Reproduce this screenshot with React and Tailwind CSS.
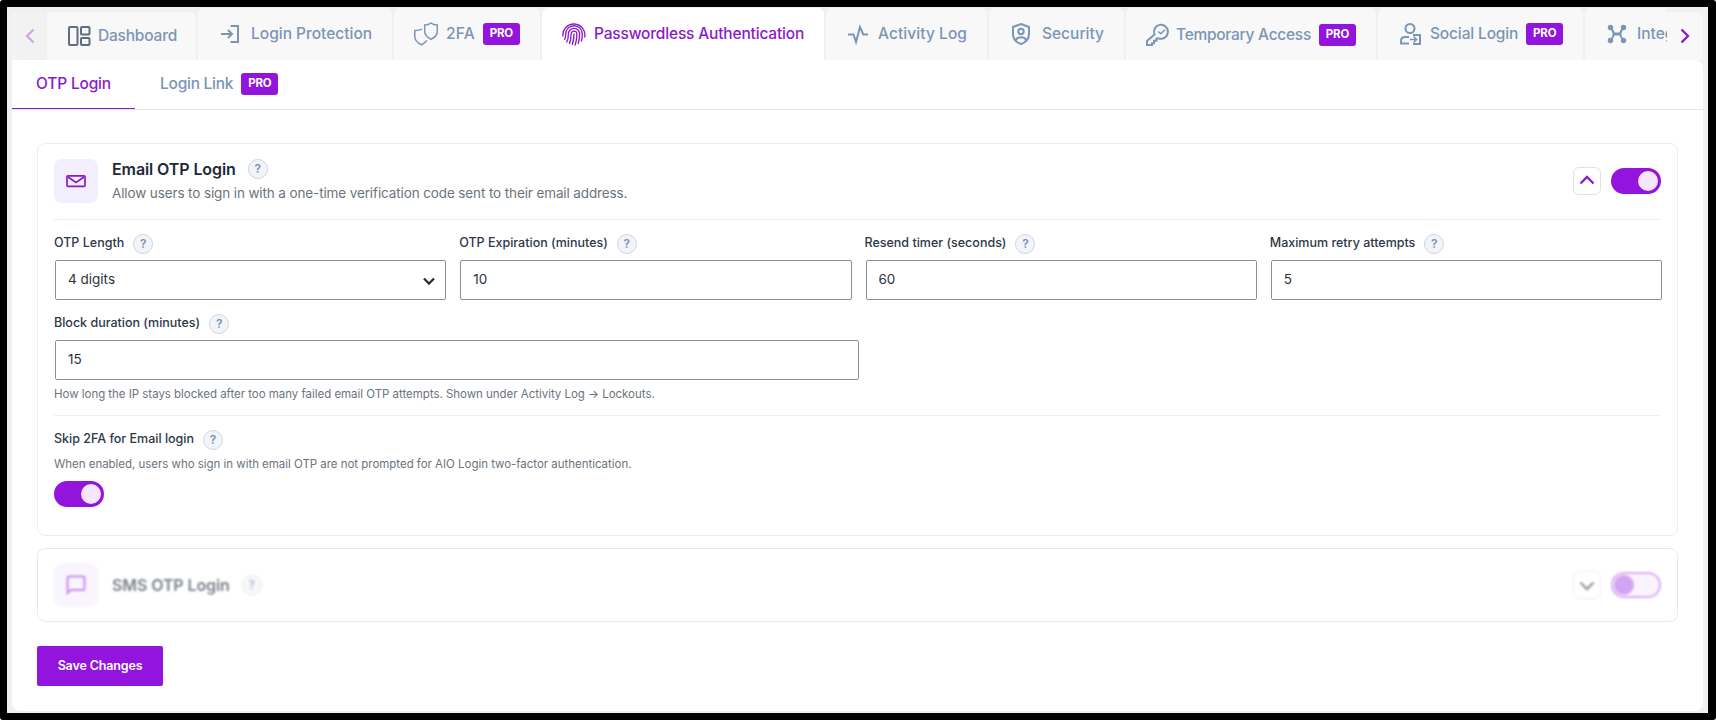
import { useState } from "react";

function Svg({ children, sw = 2, className = "" }) {
  return (
    <svg
      viewBox="0 0 24 24"
      fill="none"
      stroke="currentColor"
      strokeWidth={sw}
      className={`size-6 shrink-0 ${className}`}
    >
      {children}
    </svg>
  );
}

const icons = {
  dashboard: (
    <Svg sw={2} className="text-[#5f6c86]">
      <rect x="2" y="3" width="8.5" height="18" rx="1" />
      <rect x="14" y="3" width="8.5" height="7.5" rx="1" />
      <rect x="14" y="14" width="8.5" height="7" rx="1" />
    </Svg>
  ),
  login: (
    <Svg>
      <path d="M3 12h11M10 8l4 4-4 4" />
      <path d="M12.5 4h7.5v16h-7.5" />
    </Svg>
  ),
  twofa: (
    <Svg sw={1.5}>
      <path d="M17 1c2 1.7 4.2 2 6.3 2v6.2c0 4-2.8 6.400-6.300 8C13.500 15.600 10.700 13.200 10.700 9.200V3c2.100 0 4.300-.3 6.300-2z" />
      <path d="M8 7.100C6 8.200 3.500 8.500.8 8.500v6c0 4 2.900 6.400 6.700 8.300 2.300-1.100 4.200-2.500 5.400-4.500" />
    </Svg>
  ),
  passwordless: (
    <Svg sw={1.35}>
      <path d="M1 14.500A11 11 0 1 1 22.600 15.500" />
      <path d="M2.500 18c1-2 1.200-4 1.200-6a8.300 8.300 0 0 1 16.600 0c0 2.600-.2 5-1 7.500" />
      <path d="M4.500 20.500c1.500-2.500 1.900-5.500 1.900-8.500a5.600 5.600 0 0 1 11.200 0c0 3.500-.4 6.600-1.500 10" />
      <path d="M7.300 22c1.400-3 1.800-6.300 1.800-10a2.900 2.900 0 0 1 5.800 0c0 4-.5 7.500-1.900 11.500" />
      <path d="M12 11.500c0 4-.4 7.500-1.800 11.500" />
    </Svg>
  ),
  activity: (
    <Svg>
      <path d="M2 12.500h5.500l2.500 7.500 4-15 3.300 7.500H22" />
    </Svg>
  ),
  security: (
    <Svg>
      <path d="M12 2l8 3v7c0 4.600-3.200 8.300-8 10-4.800-1.700-8-5.400-8-10V5z" />
      <circle cx="12" cy="9.500" r="2.700" />
      <path d="M6.500 18c1.500-2 3.300-2.800 5.500-2.800s4 .8 5.500 2.800" />
    </Svg>
  ),
  access: (
    <Svg>
      <path d="M8.500 11.500A7 7 0 1 1 13 15.500l-2.500 0v2.300H8v2.500H6V22H1v-4z" />
      <path d="M12.300 8.500l2.500 2.300 4-4" strokeWidth="1.500" />
    </Svg>
  ),
  social: (
    <Svg>
      <circle cx="12" cy="6.500" r="4.500" />
      <path d="M11 21.500H3V19c0-2.500 1.500-4 4-4h4" />
      <path d="M16 14.500V13h6v9h-6v-1.500" />
      <path d="M12 17.500h6.500M16 15l2.500 2.500L16 20" strokeWidth="1.700" />
    </Svg>
  ),
  integrations: (
    <Svg>
      <path d="M5.500 6q6.500 6 0 12M18.500 6q-6.500 6 0 12M8 12h8" />
      <rect x="8.500" y="10.500" width="7" height="3" fill="currentColor" stroke="none" />
      <g fill="currentColor" stroke="none">
        <circle cx="5.500" cy="5.500" r="2.700" />
        <circle cx="18.500" cy="5.500" r="2.700" />
        <circle cx="5.500" cy="18.500" r="2.700" />
        <circle cx="18.500" cy="18.500" r="2.700" />
      </g>
    </Svg>
  ),
};

const tabs = [
  { id: "dashboard", label: "Dashboard", box: "w-[149px] mt-[5px] h-12", text: "-ml-px tracking-[-0.2px]" },
  { id: "login", label: "Login Protection", box: "w-[194px] mt-px pb-px h-[52px] rounded-t-md", text: "ml-px" },
  { id: "twofa", label: "2FA", pro: true, box: "w-[146px] mt-px pb-px h-[52px] rounded-t-md", text: "tracking-[0.2px]" },
  { id: "passwordless", label: "Passwordless Authentication", box: "w-[282px] mt-px pb-px h-[52px] rounded-t-md", text: "tracking-[-0.17px]" },
  { id: "activity", label: "Activity Log", box: "w-[161px] mt-px pb-px h-[52px] rounded-t-md", text: "tracking-[0.07px]" },
  { id: "security", label: "Security", box: "w-[135px] mt-px pb-px h-[52px] rounded-t-md", text: "ml-px" },
  { id: "access", label: "Temporary Access", pro: true, box: "w-[250px] mt-px pt-px h-[52px] rounded-t-md", text: "-ml-0.5 tracking-[-0.27px]" },
  { id: "social", label: "Social Login", pro: true, box: "w-[205px] mt-px pb-px h-[52px] rounded-t-md", text: "tracking-[-0.15px]" },
  { id: "integrations", label: "Integrations", box: "w-[160px] mt-px pb-px h-[52px] rounded-t-md", text: "" },
];

function ProBadge() {
  return (
    <span className="flex h-[22px] w-[37px] shrink-0 items-center justify-center rounded-[3px] bg-[#9314dc] text-[11.5px] font-bold tracking-[-0.2px] text-white">
      PRO
    </span>
  );
}

function Help() {
  return (
    <span className="flex size-5 shrink-0 items-center justify-center rounded-full border border-[#cfd6e0] bg-[#f1f4f8] text-xs font-semibold text-[#7a90b5]">
      ?
    </span>
  );
}

function Chevron({ d, className }) {
  return (
    <svg viewBox="0 0 16 16" fill="none" stroke="currentColor" strokeWidth="2.300" className={className}>
      <path d={d} />
    </svg>
  );
}

function Toggle({ on, onClick }) {
  return (
    <button
      role="switch"
      aria-checked={on}
      onClick={onClick}
      className={`flex h-[26px] w-[50px] items-center rounded-full border-2 px-px ${
        on ? "justify-end border-[#9314dc] bg-[#9314dc]" : "justify-start border-[#bf74ea] bg-[#f7eefe]"
      }`}
    >
      <span className={`size-5 rounded-full ${on ? "bg-[#f5e6fd]" : "bg-[#b968ea]"}`} />
    </button>
  );
}

function Label({ children }) {
  return (
    <div className="flex h-5 gap-[9px]">
      <span className="text-[12.5px] leading-[17px] font-medium text-[#2c3848]">{children}</span>
      <Help />
    </div>
  );
}

const inputClass =
  "ml-px mt-1.5 flex h-10 items-center rounded-[2px] border border-[#8c8f94] bg-white px-3 pb-0.5 text-[13.5px] text-[#2c3338] outline-none";

function Field({ label, value }) {
  return (
    <div className="flex flex-col">
      <Label>{label}</Label>
      <input className={inputClass} defaultValue={value} />
    </div>
  );
}

function App() {
  const [active, setActive] = useState("passwordless");
  const [emailOn, setEmailOn] = useState(true);
  const [skip, setSkip] = useState(true);

  return (
    <div className="h-[720px] w-[1716px] overflow-hidden rounded-[3px] border-[7px] border-r-8 border-black bg-[#f0f0f1] pr-[5px] pl-[5px] font-['Inter','Liberation_Sans',sans-serif]">
      <nav className="flex h-[53px] text-[15.5px] font-medium text-[#7b95b5]">
        <button className="mt-[5px] flex h-12 w-[35px] shrink-0 items-center justify-center bg-linear-to-r from-[#f3f3f3] to-[#f1f1f2] text-[#d4a1ee]">
          <Chevron d="M11.500 1.500L5 8l6.500 6.500" className="size-4" />
        </button>
        <div className="flex min-w-0 flex-1 gap-0.5 overflow-hidden">
          {tabs.map((t) => (
            <button
              key={t.id}
              onClick={() => setActive(t.id)}
              className={`flex shrink-0 items-center gap-2 rounded-tr-md pl-5 ${t.box} ${
                active === t.id ? "bg-white text-[#8a1ac9]" : "bg-[#f8f8f8]"
              }`}
            >
              {icons[t.id]}
              <span className={`whitespace-nowrap ${t.text}`}>{t.label}</span>
              {t.pro ? <ProBadge /> : null}
            </button>
          ))}
        </div>
        <button className="mt-[5px] flex h-12 w-9 shrink-0 items-center justify-center rounded-tr-md bg-[#f8f8f8] text-[#8a1ac9]">
          <Chevron d="M4.500 1.500L11 8l-6.500 6.500" className="size-4" />
        </button>
      </nav>

      <main className="h-[651px] rounded-b-lg rounded-tr-lg bg-white">
        <div className="flex h-[50px] border-b border-[#e6e7e9] text-[15.5px] font-medium">
          <button className="-mb-px flex h-[49px] w-[123px] items-center justify-center border-b border-[#8a1ac9] tracking-[-0.2px] text-[#8a1ac9]">
            OTP Login
          </button>
          <button className="flex h-12 items-center gap-2 pl-[25px] text-[#7b95b5]">
            <span className="tracking-[-0.25px]">Login Link</span>
            <ProBadge />
          </button>
        </div>

        <div className="flex flex-col items-start pt-[33px] pr-[25px] pl-[25px]">
          <section className="h-[393px] w-full rounded-lg border border-[#eceef0] px-4">
            <div className="flex h-[76px] items-center border-b border-[#ebedef] pb-0.5">
              <div className="flex size-11 items-center justify-center rounded-lg bg-[#f4efff] text-[#8a1ac9]">
                <svg viewBox="0 0 20 14" fill="none" stroke="currentColor" strokeWidth="1.700" className="h-3.5 w-5">
                  <rect x="1" y="1.800" width="18" height="10.500" rx="1" />
                  <path d="M2 3l8 5.500L18 3" />
                </svg>
              </div>
              <div className="ml-3.5 flex-1">
                <div className="flex items-center gap-3">
                  <h2 className="text-base leading-6 font-semibold tracking-[-0.1px] text-[#1d2939]">Email OTP Login</h2>
                  <Help />
                </div>
                <p className="text-[13.5px] leading-6 tracking-[-0.12px] text-[#6b747e]">
                  Allow users to sign in with a one-time verification code sent to their email address.
                </p>
              </div>
              <button className="mr-2.5 flex size-7 items-center justify-center rounded-md border border-[#dfe3e8] text-[#8a1ac9]">
                <Chevron d="M1.500 10.500L8 4l6.500 6.500" className="size-4" />
              </button>
              <Toggle on={emailOn} onClick={() => setEmailOn(!emailOn)} />
            </div>

            <div className="-mr-px grid grid-cols-4 gap-x-[13px] gap-y-3.5 pt-3.5">
              <div className="flex flex-col">
                <Label>OTP Length</Label>
                <button className={`${inputClass} justify-between pr-2`}>
                  4 digits
                  <Chevron d="M3 5.500l5 5 5-5" className="mt-1 size-4" />
                </button>
              </div>
              <Field label="OTP Expiration (minutes)" value="10" />
              <Field label="Resend timer (seconds)" value="60" />
              <Field label="Maximum retry attempts" value="5" />
            </div>
            <div className="w-[805px] pt-3.5">
              <Field label="Block duration (minutes)" value="15" />
            </div>
            <p className="mt-[5px] text-[11.5px] leading-[18px] tracking-[-0.03px] text-[#6b747e]">
              How long the IP stays blocked after too many failed email OTP attempts. Shown under Activity Log → Lockouts.
            </p>
            <div className="mt-3 border-t border-[#f0f1f3] pt-3.5">
              <Label>Skip 2FA for Email login</Label>
              <p className="mt-[5px] mb-2 text-[11.5px] leading-[18px] tracking-[-0.03px] text-[#6b747e]">
                When enabled, users who sign in with email OTP are not prompted for AIO Login two-factor authentication.
              </p>
              <Toggle on={skip} onClick={() => setSkip(!skip)} />
            </div>
          </section>

          <section className="mt-3 h-[74px] w-full rounded-lg border border-[#e7eaed] px-4">
            <div className="flex h-[72px] items-center opacity-60 blur-[0.8px]">
              <div className="flex size-11 items-center justify-center rounded-lg bg-[#f4efff] text-[#a83ee4]">
                <svg viewBox="0 0 20 20" fill="none" stroke="currentColor" strokeWidth="2" className="size-5">
                  <path d="M1.500 18V3.200c0-1 .7-1.700 1.700-1.700h13.600c1 0 1.700.7 1.700 1.700v10c0 1-.7 1.700-1.700 1.700H5z" />
                </svg>
              </div>
              <h2 className="ml-3.5 text-base font-semibold tracking-[-0.1px] text-[#1d2939]">SMS OTP Login</h2>
              <div className="ml-3 flex-1">
                <Help />
              </div>
              <button className="mr-2.5 flex size-7 items-center justify-center rounded-md border border-[#dfe3e8] text-[#4b5563]">
                <Chevron d="M1.500 5.500L8 12l6.500-6.500" className="size-4" />
              </button>
              <Toggle on={false} />
            </div>
          </section>

          <button className="mt-6 h-10 w-[126px] rounded-[2px] bg-[#9314dc] text-[12.5px] font-semibold tracking-[-0.15px] text-white">
            Save Changes
          </button>
        </div>
      </main>
    </div>
  );
}

export default App;
